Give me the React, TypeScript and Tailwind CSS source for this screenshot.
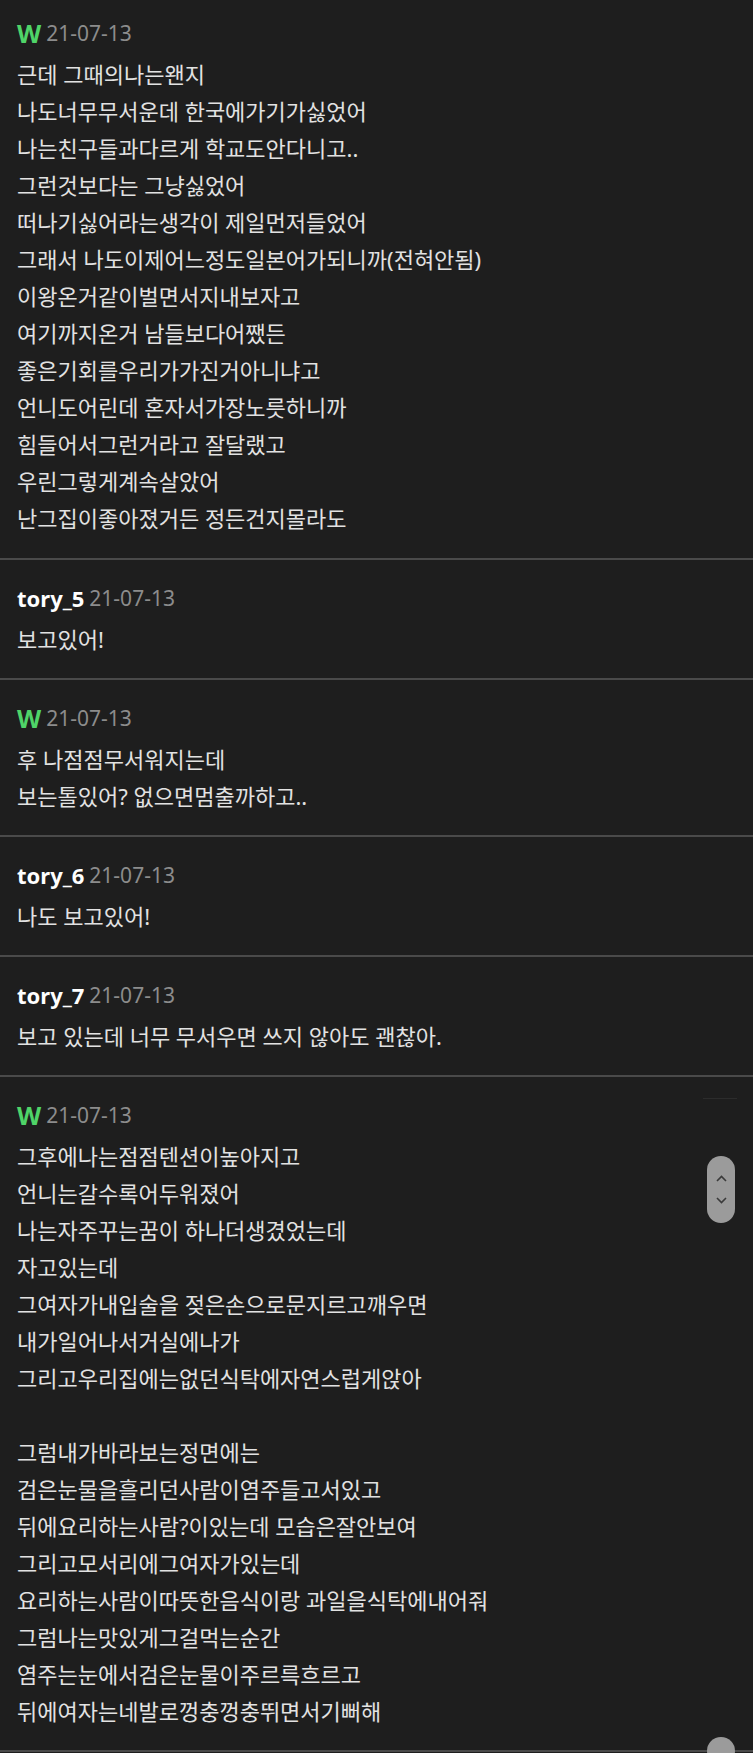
import React from "react";

type Comment = {
  name: string;
  writer?: boolean;
  date: string;
  lines: string[];
};

const comments: Comment[] = [
  {
    name: "W",
    writer: true,
    date: "21-07-13",
    lines: [
      "근데 그때의나는왠지",
      "나도너무무서운데 한국에가기가싫었어",
      "나는친구들과다르게 학교도안다니고..",
      "그런것보다는 그냥싫었어",
      "떠나기싫어라는생각이 제일먼저들었어",
      "그래서 나도이제어느정도일본어가되니까(전혀안됨)",
      "이왕온거같이벌면서지내보자고",
      "여기까지온거 남들보다어쨌든",
      "좋은기회를우리가가진거아니냐고",
      "언니도어린데 혼자서가장노릇하니까",
      "힘들어서그런거라고 잘달랬고",
      "우린그렇게계속살았어",
      "난그집이좋아졌거든 정든건지몰라도",
    ],
  },
  { name: "tory_5", date: "21-07-13", lines: ["보고있어!"] },
  {
    name: "W",
    writer: true,
    date: "21-07-13",
    lines: ["후 나점점무서워지는데", "보는톨있어? 없으면멈출까하고.."],
  },
  { name: "tory_6", date: "21-07-13", lines: ["나도 보고있어!"] },
  { name: "tory_7", date: "21-07-13", lines: ["보고 있는데 너무 무서우면 쓰지 않아도 괜찮아."] },
  {
    name: "W",
    writer: true,
    date: "21-07-13",
    lines: [
      "그후에나는점점텐션이높아지고",
      "언니는갈수록어두워졌어",
      "나는자주꾸는꿈이 하나더생겼었는데",
      "자고있는데",
      "그여자가내입술을 젖은손으로문지르고깨우면",
      "내가일어나서거실에나가",
      "그리고우리집에는없던식탁에자연스럽게앉아",
      "",
      "그럼내가바라보는정면에는",
      "검은눈물을흘리던사람이염주들고서있고",
      "뒤에요리하는사람?이있는데 모습은잘안보여",
      "그리고모서리에그여자가있는데",
      "요리하는사람이따뜻한음식이랑 과일을식탁에내어줘",
      "그럼나는맛있게그걸먹는순간",
      "염주는눈에서검은눈물이주르륵흐르고",
      "뒤에여자는네발로껑충껑충뛰면서기뻐해",
    ],
  },
];

function CommentBlock({ c, first }: { c: Comment; first: boolean }) {
  return (
    <div className={`px-[17px] ${first ? "pt-[15px] pb-[21px]" : "pt-[20px] pb-[20px]"} border-b-2 border-[#4a4a4a]`}>
      <div className="h-[36px] flex items-center gap-[5px]">
        {c.writer ? (
          <span className="text-[25px] leading-none font-bold text-[#4fd468]">{c.name}</span>
        ) : (
          <span className="text-[22px] leading-none font-bold text-white">{c.name}</span>
        )}
        <span className="text-[21px] leading-none text-[#8c8c8c]">{c.date}</span>
      </div>
      <div className="mt-[5px] text-[22px] leading-[37px] text-[#e2e2e2]">
        {c.lines.map((line, i) => (
          <div key={i} className="h-[37px] whitespace-nowrap">
            {line}
          </div>
        ))}
      </div>
    </div>
  );
}

export default function App() {
  return (
    <div
      className="relative w-[753px] h-[1753px] overflow-hidden bg-[#1e1e1e]"
      style={{ fontFamily: '"Noto Sans", "Noto Sans CJK KR", sans-serif' }}
    >
      {comments.map((c, i) => (
        <CommentBlock key={i} c={c} first={i === 0} />
      ))}

      {/* faint line above the scroll pill */}
      <div className="absolute left-[703px] top-[1098px] w-[34px] h-px bg-[#2c2c2c]" />

      {/* scroll pill */}
      <div className="absolute left-[707px] top-[1156px] w-[28px] h-[67px] rounded-full bg-[#9b9b9b] flex flex-col items-center justify-center gap-[15px]">
        <svg width="11" height="7" viewBox="0 0 11 7" fill="none">
          <path d="M1 6 L5.5 1.5 L10 6" stroke="#3a3a3a" strokeWidth="1.6" />
        </svg>
        <svg width="11" height="7" viewBox="0 0 11 7" fill="none">
          <path d="M1 1 L5.5 5.5 L10 1" stroke="#3a3a3a" strokeWidth="1.6" />
        </svg>
      </div>

      {/* bottom scroll handle peeking */}
      <div className="absolute left-[707px] top-[1737px] w-[28px] h-[28px] rounded-full bg-[#9b9b9b]" />
    </div>
  );
}
